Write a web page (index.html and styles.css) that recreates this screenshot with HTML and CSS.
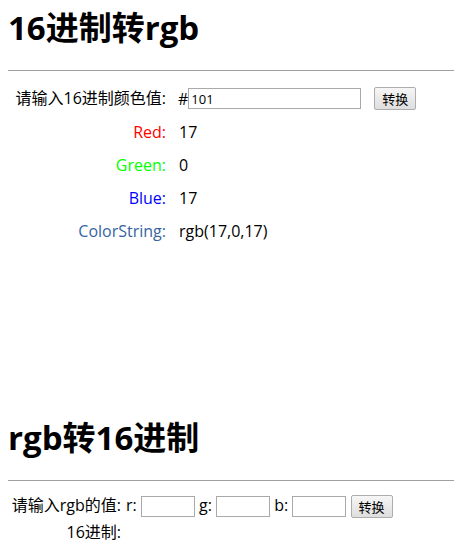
FILE: index.html
```html
<!DOCTYPE html>
<html>
<head>
<meta charset="utf-8">
<title>16进制转rgb</title>
<link rel="stylesheet" href="styles.css">
</head>
<body>
<section class="hex2rgb">
  <h1 class="title">16进制转rgb</h1>
  <hr class="rule">
  <div class="grid">
    <div class="label">请输入16进制颜色值:</div>
    <div class="value"><span class="hash">#</span><input class="hex-input" type="text" value="101"><button class="btn btn-gap">转换</button></div>
    <div class="label red">Red:</div>
    <div class="value">17</div>
    <div class="label green">Green:</div>
    <div class="value">0</div>
    <div class="label blue">Blue:</div>
    <div class="value">17</div>
    <div class="label cstr">ColorString:</div>
    <div class="value">rgb(17,0,17)</div>
  </div>
</section>
<section class="rgb2hex">
  <h1 class="title">rgb转16进制</h1>
  <hr class="rule">
  <div class="grid2">
    <div class="label2">请输入rgb的值:</div>
    <div class="value2">r: <input class="small-input" type="text"> g: <input class="small-input" type="text"> b: <input class="small-input" type="text"> <button class="btn">转换</button></div>
    <div class="label2">16进制:</div>
    <div class="value2"></div>
  </div>
</section>
</body>
</html>
```
FILE: styles.css
```css
html, body {
  background: #fff;
}
body {
  margin: 0 0 0 8px;
  font-family: "Open Sans", "Noto Sans CJK SC", sans-serif;
  font-size: 16px;
  color: #000;
}
.title {
  margin: 0;
  padding-top: 6px;
  font-size: 33px;
  font-weight: bold;
  line-height: 44px;
}
.rule {
  margin: 20px 0 0 0;
  border: 0;
  border-top: 1px solid #a0a0a0;
  height: 0;
}
.grid {
  display: grid;
  grid-template-columns: 158px auto;
  column-gap: 12px;
  margin-top: 16px;
  line-height: 22px;
  row-gap: 11px;
  justify-content: start;
}
.label {
  text-align: right;
}
.value {
  display: flex;
  align-items: center;
}
.red { color: #ff0000; }
.green { color: #00ff00; }
.blue { color: #0000ff; }
.cstr { color: #36649f; }
.value + .label + .value,
.grid > .value:not(:nth-child(2)) {
  padding-left: 1px;
}
.hex-input {
  width: 173px;
  height: 21px;
  box-sizing: border-box;
  border: 1px solid #a9a9a9;
  padding: 0 2px;
  font-family: "Open Sans", sans-serif;
  font-size: 13px;
  margin: 0;
}
.btn {
  height: 23px;
  box-sizing: border-box;
  padding: 0 7px;
  border: 1px solid #adadad;
  border-radius: 2px;
  background: linear-gradient(#f6f6f6, #dedede);
  font-family: "Noto Sans CJK SC", sans-serif;
  font-size: 13px;
  line-height: 20px;
  color: #000;
  margin: 0;
}
.btn-gap {
  margin-left: 13px;
}
.rgb2hex {
  margin-top: 168px;
}
.grid2 {
  display: grid;
  grid-template-columns: 110px auto;
  column-gap: 5px;
  margin-top: 12px;
  margin-left: 3px;
  row-gap: 2px;
  line-height: 24px;
  justify-content: start;
}
.label2 {
  text-align: right;
}
.value2 {
  white-space: nowrap;
}
.small-input {
  width: 54px;
  height: 21px;
  box-sizing: border-box;
  border: 1px solid #a9a9a9;
  margin: 0;
  padding: 0;
  vertical-align: middle;
}
.value2 .btn {
  vertical-align: middle;
}
```
